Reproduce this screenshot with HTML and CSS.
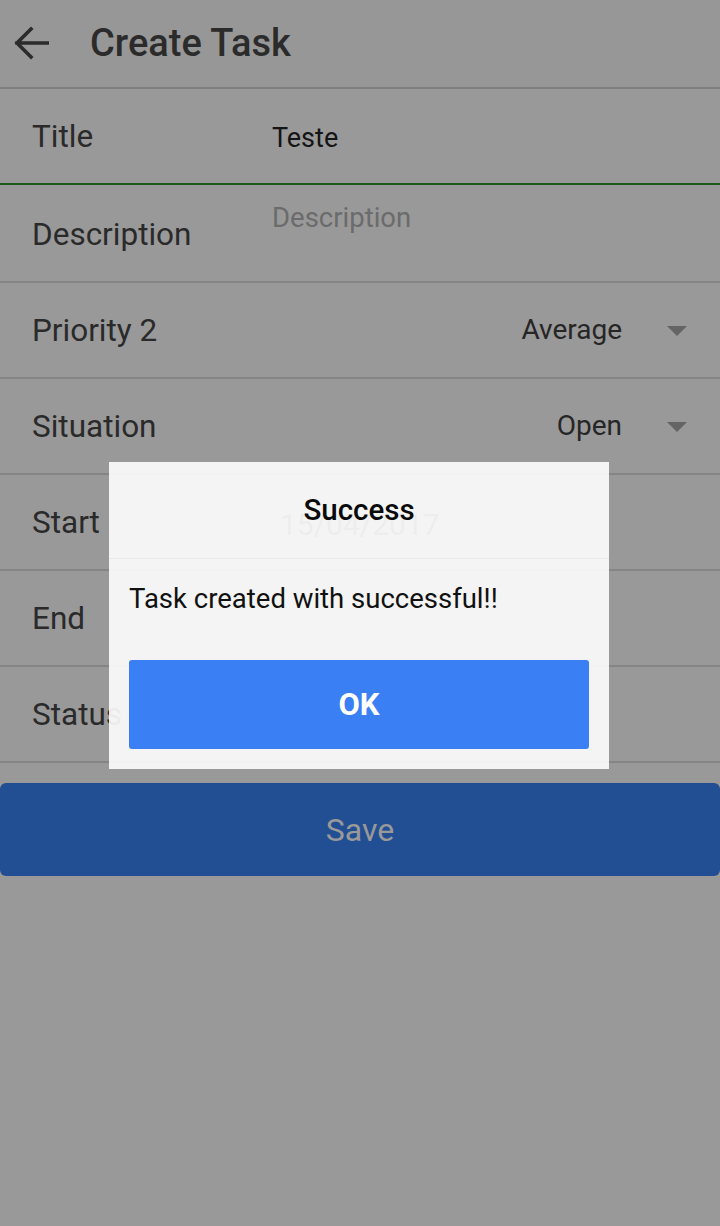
FILE: index.html
```html
<!DOCTYPE html>
<html>
<head>
<meta charset="utf-8">
<link rel="stylesheet" href="styles.css">
</head>
<body>
<div class="screen">
  <header class="topbar">
    <svg class="back" width="36" height="34" viewBox="0 0 36 34"><path d="M34.5 17H4M18 3L4 17L18 31" fill="none" stroke="#2b2b2b" stroke-width="3.6" stroke-linecap="square" stroke-linejoin="miter"/></svg>
    <h1 class="title">Create Task</h1>
  </header>
  <div class="form">
    <div class="row row-active">
      <span class="label">Title</span>
      <span class="value">Teste</span>
    </div>
    <div class="row row-desc">
      <span class="label">Description</span>
      <span class="placeholder">Description</span>
    </div>
    <div class="row">
      <span class="label">Priority 2</span>
      <span class="select"><span class="select-text">Average</span><span class="caret"></span></span>
    </div>
    <div class="row">
      <span class="label">Situation</span>
      <span class="select"><span class="select-text">Open</span><span class="caret"></span></span>
    </div>
    <div class="row">
      <span class="label">Start</span>
      <span class="date">15/04/2017</span>
    </div>
    <div class="row">
      <span class="label">End</span>
    </div>
    <div class="row">
      <span class="label">Status</span>
    </div>
  </div>
  <div class="save-wrap">
    <button class="save">Save</button>
  </div>

  <div class="dialog">
    <div class="dialog-head">Success</div>
    <div class="dialog-body">
      <p class="dialog-msg">Task created with successful!!</p>
      <button class="ok">OK</button>
    </div>
  </div>
</div>
</body>
</html>
```
FILE: styles.css
```css
* { box-sizing: border-box; }
html, body { margin: 0; padding: 0; }
body {
  background: #999999;
  font-family: Roboto, "Noto Sans", sans-serif;
  width: 720px;
  height: 1226px;
  overflow: hidden;
}
.screen {
  position: relative;
  width: 720px;
  height: 1226px;
  background: #999999;
}
.topbar {
  height: 89px;
  display: flex;
  align-items: center;
  background: #979797;
  border-bottom: 2px solid #7e7e7e;
  padding-left: 13px;
}
.back { display: block; margin-top: -2px; }
.title {
  margin: -2px 0 0 41px;
  font-size: 38px;
  font-weight: 500;
  color: #2b2b2b;
}
.row {
  height: 96px;
  display: flex;
  align-items: center;
  border-bottom: 2px solid #858585;
  padding-left: 32px;
  position: relative;
}
.row-active {
  height: 96px;
  border-bottom: 2px solid #1b5a1b;
}
.label {
  font-size: 31.5px;
  color: #2a2a2a;
  width: 240px;
  flex: none;
}
.value {
  font-size: 27px;
  color: #141414;
  margin-top: 4px;
}
.row-desc {
  height: 98px;
  align-items: flex-start;
}
.row-desc .label { margin-top: 31px; }
.placeholder {
  font-size: 27.5px;
  color: #6b6b6b;
  margin-top: 16px;
}
.select {
  margin-left: auto;
  display: flex;
  align-items: center;
  padding-right: 33px;
}
.select-text {
  font-size: 28px;
  color: #262626;
  margin-top: -2px;
}
.caret {
  width: 0; height: 0;
  border-left: 10px solid transparent;
  border-right: 10px solid transparent;
  border-top: 10px solid #646464;
  margin-left: 45px;
  margin-top: 2px;
}
.date {
  font-size: 30px;
  color: #444444;
  margin-left: 8px;
  margin-top: 4px;
}
.save-wrap { padding-top: 20px; }
.save {
  display: block;
  width: 720px;
  height: 93px;
  border: none;
  border-radius: 6px;
  background: #224e94;
  color: #999999;
  font-family: Roboto, sans-serif;
  font-size: 32px;
}
.dialog {
  position: absolute;
  left: 109px;
  top: 462px;
  width: 500px;
  height: 307px;
  background: rgba(252, 252, 252, 0.92);
  display: flex;
  flex-direction: column;
}
.dialog-head {
  height: 97px;
  border-bottom: 1px solid #eaeaea;
  display: flex;
  align-items: center;
  justify-content: center;
  font-size: 29.5px;
  font-weight: 500;
  color: #0a0a0a;
  padding-bottom: 1px;
}
.dialog-body {
  padding: 0 20px 20px;
  flex: 1;
  display: flex;
  flex-direction: column;
}
.dialog-msg {
  margin: 23px 0 0;
  font-size: 27.5px;
  color: #111111;
}
.ok {
  margin-top: auto;
  height: 89px;
  border: none;
  border-radius: 3px;
  background: #3a7ff3;
  color: #ffffff;
  font-family: Roboto, sans-serif;
  font-size: 31px;
  font-weight: 700;
}
```
